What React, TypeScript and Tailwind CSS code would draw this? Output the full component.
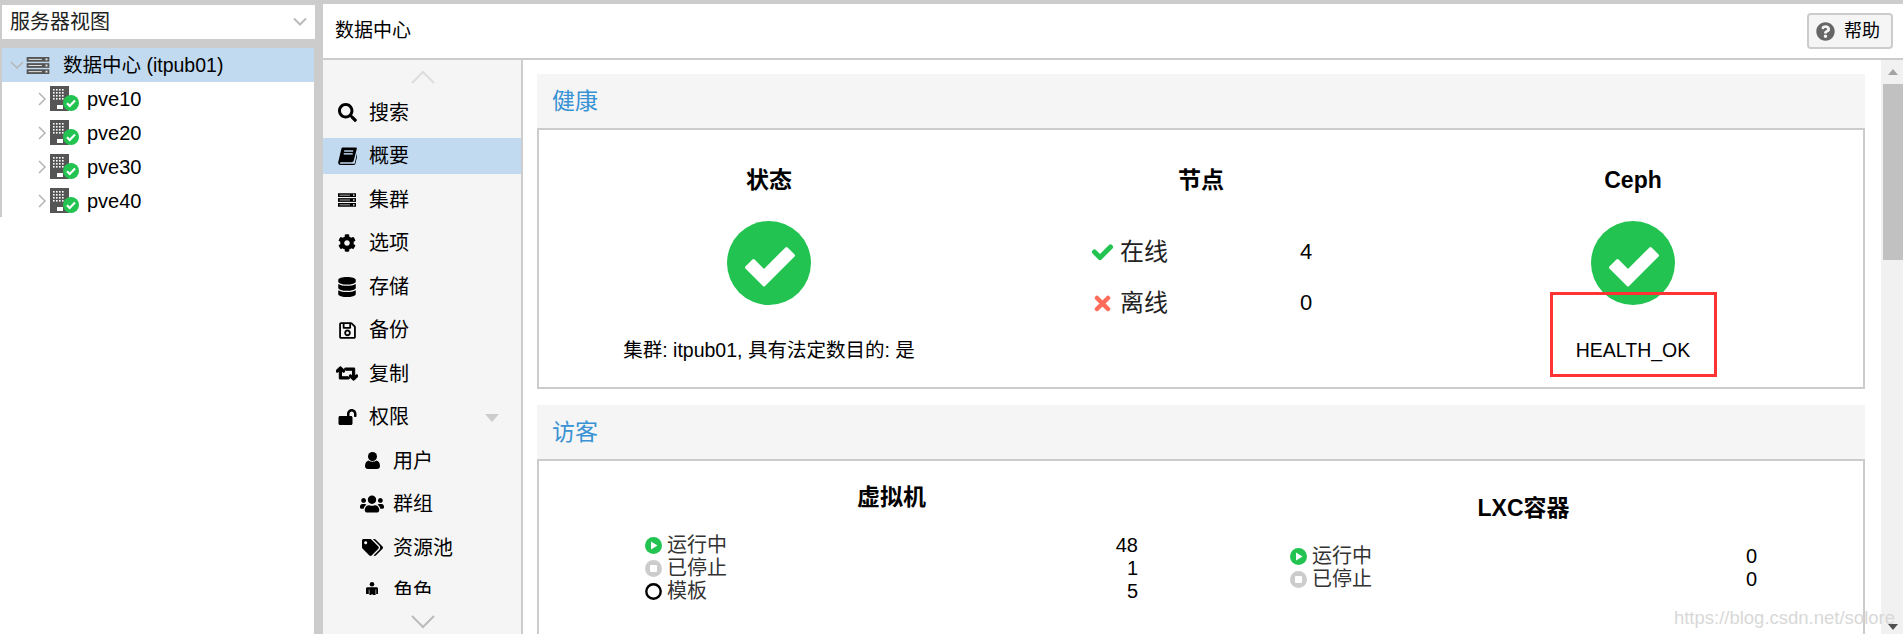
import type { ReactNode } from 'react';
import {
  FaDatabase,
  FaLockOpen,
  FaQuestionCircle,
  FaRegSave,
  FaRetweet,
  FaSearch,
  FaTags,
  FaUsers,
  FaCog,
} from 'react-icons/fa';

function ServerIcon({ className }: { className?: string }) {
  return (
    <svg viewBox="0 0 24 18" className={className} fill="currentColor">
      <rect x="0" y="0" width="24" height="5" />
      <rect x="0" y="6.500" width="24" height="5" />
      <rect x="0" y="13" width="24" height="5" />
      <g fill="#e8e8e8">
        <rect x="2" y="2" width="14" height="1" />
        <rect x="2" y="8.500" width="14" height="1" />
        <rect x="2" y="15" width="14" height="1" />
        <rect x="20" y="1.500" width="2" height="2" />
        <rect x="20" y="8" width="2" height="2" />
        <rect x="20" y="14.500" width="2" height="2" />
      </g>
    </svg>
  );
}

function BookIcon({ className }: { className?: string }) {
  return (
    <svg viewBox="0 0 20 18" className={className} fill="currentColor">
      <path d="M5 0h14c.8 0 1 .6.8 1.300L16.500 14c-.3 1-1 1.500-2 1.500H3c-.8 0-1.200.5-1 1s.6.700 1.200.7h13.300c.7 0 1-.3 1.200-.9l2.500-11 .8.500-2.700 11.400c-.2.800-1 1.300-1.900 1.300H3c-1.800 0-3-1.300-2.800-3L3.500 1.500C3.700.6 4.200 0 5 0z" />
      <rect x="6.500" y="3" width="9.500" height="1.500" fill="#c1daf0" />
      <rect x="6" y="6" width="9.500" height="1.500" fill="#c1daf0" />
    </svg>
  );
}

function UserIcon() {
  return (
    <svg viewBox="0 0 15 17" className="h-[17px] w-[15px]" fill="currentColor">
      <circle cx="7.500" cy="4.500" r="4.500" />
      <path d="M3.500 8.500c2.200 1.600 5.800 1.600 8 0 2 .6 3.500 2.500 3.500 5.500 0 2-1.200 3-3 3H3c-1.800 0-3-1-3-3 0-3 1.500-4.900 3.500-5.500z" />
    </svg>
  );
}

function RoleIcon() {
  return (
    <svg viewBox="0 0 12 18" className="h-[18px] w-[12px]" fill="currentColor">
      <circle cx="6" cy="2.300" r="2.300" />
      <path d="M1.500 5.200h9c.9 0 1.500.6 1.500 1.500v5.300h-1.800V7.500h-.6V18H6.500v-6h-1v6H3.400V7.500h-.6V12H0V6.700c0-.9.600-1.500 1.500-1.500z" />
    </svg>
  );
}

function NodeIcon() {
  const dots = [];
  for (let y = 3; y < 15; y += 3) {
    for (let x = 3; x < 14; x += 3) {
      dots.push(<rect key={`${x}-${y}`} x={x} y={y} width="1.600" height="1.600" fill="#ffffff" />);
    }
  }
  return (
    <div className="relative h-[26px] w-[30px] shrink-0">
      <svg viewBox="0 0 19 25" className="absolute left-0 top-0 h-[25px] w-[19px]">
        <rect width="19" height="25" fill="#555555" />
        {dots}
        <rect x="7" y="19" width="6" height="4" fill="#ffffff" />
      </svg>
      <svg viewBox="0 0 16 16" className="absolute left-[13px] top-[9px] h-[16px] w-[16px]">
        <circle cx="8" cy="8" r="8" fill="#22c351" />
        <path d="M4 8.300l2.700 2.700L12 5.600" fill="none" stroke="#ffffff" strokeWidth="2.200" />
      </svg>
    </div>
  );
}

function TreeChevron({ open }: { open?: boolean }) {
  return (
    <svg viewBox="0 0 14 14" className="h-[14px] w-[14px] shrink-0 text-[#b5b5b5]" fill="none" stroke="currentColor" strokeWidth="1.500">
      {open ? <path d="M1 4l6 6 6-6" /> : <path d="M4 1l6 6-6 6" />}
    </svg>
  );
}

function BigCheck() {
  return (
    <svg viewBox="0 0 84 84" className="h-[84px] w-[84px]">
      <circle cx="42" cy="42" r="42" fill="#22c351" />
      <path
        d="M26.500 39.500L37 50l22.500-22.500 7 7L37 64 19.500 46.500z"
        fill="#ffffff"
        stroke="#ffffff"
        strokeWidth="3"
        strokeLinejoin="round"
      />
    </svg>
  );
}

function StateDot({ kind }: { kind: 'run' | 'stop' | 'tpl' }) {
  return (
    <svg viewBox="0 0 17 17" className="h-[17px] w-[17px] shrink-0">
      {kind === 'run' && (
        <>
          <circle cx="8.500" cy="8.500" r="8.500" fill="#22c351" />
          <path d="M6 4.500l6.500 4-6.500 4z" fill="#ffffff" />
        </>
      )}
      {kind === 'stop' && (
        <>
          <circle cx="8.500" cy="8.500" r="8.500" fill="#cccccc" />
          <rect x="5" y="5" width="7" height="7" rx="1" fill="#ffffff" />
        </>
      )}
      {kind === 'tpl' && <circle cx="8.500" cy="8.500" r="7.200" fill="none" stroke="#000000" strokeWidth="2.400" />}
    </svg>
  );
}

type NavItem = { label: string; icon: ReactNode; sub?: boolean; active?: boolean; caret?: boolean };

const navItems: NavItem[] = [
  { label: '搜索', icon: <FaSearch className="h-[19px] w-[19px]" /> },
  { label: '概要', icon: <BookIcon className="h-[18px] w-[19px]" />, active: true },
  { label: '集群', icon: <ServerIcon className="h-[16px] w-[18px] text-black" /> },
  { label: '选项', icon: <FaCog className="h-[18px] w-[18px]" /> },
  { label: '存储', icon: <FaDatabase className="h-[20px] w-[18px]" /> },
  { label: '备份', icon: <FaRegSave className="h-[19px] w-[17px]" /> },
  { label: '复制', icon: <FaRetweet className="h-[19px] w-[22px] stroke-[30px]" /> },
  { label: '权限', icon: <FaLockOpen className="h-[16px] w-[19px]" />, caret: true },
  { label: '用户', icon: <UserIcon />, sub: true },
  { label: '群组', icon: <FaUsers className="h-[20px] w-[25px]" />, sub: true },
  { label: '资源池', icon: <FaTags className="h-[19px] w-[21px]" />, sub: true },
  { label: '角色', icon: <RoleIcon />, sub: true },
];

function PanelHeader({ title }: { title: string }) {
  return (
    <div className="flex h-[54px] items-center bg-[#f5f5f5] pl-[15px] text-[23px] text-[#3892d4]">{title}</div>
  );
}

function CountRow({ kind, label, value }: { kind: 'run' | 'stop' | 'tpl'; label: string; value: number }) {
  return (
    <div className="flex h-[23px] items-center">
      <StateDot kind={kind} />
      <span className="ml-[5px] flex-1 text-[#333333]">{label}</span>
      <span>{value}</span>
    </div>
  );
}

export default function App() {
  return (
    <div className="relative flex h-[634px] w-full overflow-hidden bg-[#cccccc] pt-[4px] text-[20px] leading-[28px] text-black [font-family:'Liberation_Sans','Noto_Sans_CJK_SC',sans-serif]">
      {/* left tree */}
      <aside className="flex w-[323px] shrink-0 flex-col pl-[2px] pr-[9px]">
        <div className="mt-[1px] -mr-[1px] flex h-[34px] items-center justify-between bg-white pl-[8px] pr-[8px]">
          <span className="text-[#222222]">服务器视图</span>
          <svg viewBox="0 0 14 10" className="h-[10px] w-[14px] text-[#bbbbbb]" fill="none" stroke="currentColor" strokeWidth="2">
            <path d="M1 1.500l6 6 6-6" />
          </svg>
        </div>
        <div className="mt-[9px] flex h-[34px] items-center bg-[#c1daf0] pl-[8px]">
          <TreeChevron open />
          <ServerIcon className="ml-[2px] h-[17px] w-[24px] text-[#555555]" />
          <span className="ml-[13px] text-[19.500px]">数据中心 (itpub01)</span>
        </div>
        {['pve10', 'pve20', 'pve30', 'pve40'].map((n) => (
          <div key={n} className="flex h-[34px] items-center bg-white pl-[33px]">
            <TreeChevron />
            <span className="ml-[1px]"><NodeIcon /></span>
            <span className="ml-[7px]">{n}</span>
          </div>
        ))}
        <div className="-mt-[1px] -ml-[2px] flex-1 bg-white" />
      </aside>

      <div className="flex min-w-0 flex-1 flex-col">
        <header className="flex h-[54px] shrink-0 items-center justify-between bg-white pl-[12px] pr-[10px]">
          <span className="text-[19px]">数据中心</span>
          <button className="flex h-[36px] w-[86px] items-center gap-[9px] rounded-[4px] border-2 border-[#cccccc] bg-[#f5f5f5] pl-[7px] text-[18px]">
            <FaQuestionCircle className="h-[19px] w-[19px] text-[#666666]" />
            帮助
          </button>
        </header>

        <div className="mt-[2px] flex min-h-0 flex-1">
          {/* nav column */}
          <nav className="relative flex w-[200px] shrink-0 flex-col gap-[7.500px] overflow-hidden border-r-2 border-[#cccccc] bg-[#f5f5f5] pt-[34.500px]">
            <svg viewBox="0 0 24 14" className="absolute left-[88px] top-[10px] h-[14px] w-[24px] text-[#dddddd]" fill="none" stroke="currentColor" strokeWidth="2">
              <path d="M1 13L12 2l11 11" />
            </svg>
            {navItems.map((item) => (
              <div key={item.label} className={`flex h-[36px] shrink-0 items-center ${item.active ? 'bg-[#c1daf0]' : ''}`}>
                <span className={`flex w-[24px] items-center justify-center ${item.sub ? 'ml-[37px]' : 'ml-[12px]'}`}>{item.icon}</span>
                <span className={item.sub ? 'ml-[9px]' : 'ml-[10px]'}>{item.label}</span>
                {item.caret && (
                  <svg viewBox="0 0 14 8" className="ml-[76px] mt-[1px] h-[8px] w-[14px]">
                    <path d="M0 0h14l-7 8z" fill="#cccccc" />
                  </svg>
                )}
              </div>
            ))}
            {/* scroller covers the row that runs under it */}
            <div className="absolute inset-x-0 bottom-0 top-[535px] bg-[#f5f5f5]">
              <svg viewBox="0 0 24 14" className="absolute left-[88px] top-[20px] h-[14px] w-[24px] text-[#bbbbbb]" fill="none" stroke="currentColor" strokeWidth="2">
                <path d="M1 1l11 11L23 1" />
              </svg>
            </div>
          </nav>

          {/* content */}
          <main className="flex min-w-0 flex-1 flex-col overflow-hidden bg-white pl-[14px] pr-[16px] pt-[14px]">
            <section>
              <PanelHeader title="健康" />
              <div className="grid h-[261px] grid-cols-3 border-2 border-[#cccccc] px-[14px] pt-[35px]">
                <div className="flex flex-col items-center">
                  <h3 className="text-[23px] font-bold leading-[30px]">状态</h3>
                  <div className="mt-[26px]"><BigCheck /></div>
                  <p className="mt-[31px] text-[19.500px]">集群: itpub01, 具有法定数目的: 是</p>
                </div>
                <div>
                  <h3 className="text-center text-[23px] font-bold leading-[30px]">节点</h3>
                  <div className="mt-[42px] flex flex-col gap-[21px] pl-[107px]">
                    <div className="flex h-[30px] items-center text-[22px]">
                      <span className="w-[28px]">
                        <svg viewBox="0 0 21 16" className="h-[16px] w-[21px]" fill="none" stroke="#22c351" strokeWidth="5" strokeLinecap="round">
                          <path d="M2.500 8l5.500 5.500L18.500 3" />
                        </svg>
                      </span>
                      <span className="w-[180px] text-[24px] text-[#222222]">在线</span>
                      <span>4</span>
                    </div>
                    <div className="flex h-[30px] items-center text-[22px]">
                      <span className="w-[28px] pl-[2px]">
                        <svg viewBox="0 0 17 17" className="h-[17px] w-[17px]" fill="none" stroke="#ff6c59" strokeWidth="4.500" strokeLinecap="round">
                          <path d="M3 3l11 11M14 3L3 14" />
                        </svg>
                      </span>
                      <span className="w-[180px] text-[24px] text-[#222222]">离线</span>
                      <span>0</span>
                    </div>
                  </div>
                </div>
                <div className="relative flex flex-col items-center">
                  <h3 className="text-[23px] font-bold leading-[30px]">Ceph</h3>
                  <div className="mt-[26px]"><BigCheck /></div>
                  <p className="mt-[31px] text-[19.500px]">HEALTH_OK</p>
                  {/* red annotation box */}
                  <div className="absolute left-[133px] top-[127px] h-[85px] w-[167px] border-[3px] border-[#ff3333]" />
                </div>
              </div>
            </section>

            <section className="mt-[16px]">
              <PanelHeader title="访客" />
              <div className="flex h-[300px] border-2 border-[#cccccc] pt-[21px]">
                <div className="ml-[106px] w-[493px]">
                  <h3 className="text-center text-[23px] font-bold leading-[30px]">虚拟机</h3>
                  <div className="mt-[21.500px]">
                    <CountRow kind="run" label="运行中" value={48} />
                    <CountRow kind="stop" label="已停止" value={1} />
                    <CountRow kind="tpl" label="模板" value={5} />
                  </div>
                </div>
                <div className="ml-[152px] mt-[11px] w-[467px]">
                  <h3 className="text-center text-[23px] font-bold leading-[30px]">LXC容器</h3>
                  <div className="mt-[21.500px]">
                    <CountRow kind="run" label="运行中" value={0} />
                    <CountRow kind="stop" label="已停止" value={0} />
                  </div>
                </div>
              </div>
            </section>
          </main>

          {/* scrollbar */}
          <div className="relative w-[22px] shrink-0 bg-[#f1f1f1]">
            <svg viewBox="0 0 10 6" className="absolute left-[7px] top-[9px] h-[6px] w-[10px]">
              <path d="M0 6h10L5 0z" fill="#a3a3a3" />
            </svg>
            <div className="absolute left-[2px] right-0 top-[24px] h-[176px] bg-[#c1c1c1]" />
            <svg viewBox="0 0 10 6" className="absolute bottom-[4px] left-[7px] h-[6px] w-[10px]">
              <path d="M0 0h10L5 6z" fill="#505050" />
            </svg>
          </div>
        </div>
      </div>

      {/* site watermark */}
      <div className="absolute bottom-[4px] right-[8px] text-[18.500px] leading-[24px] text-[#d8d8d8]">https://blog.csdn.net/solore</div>
    </div>
  );
}
